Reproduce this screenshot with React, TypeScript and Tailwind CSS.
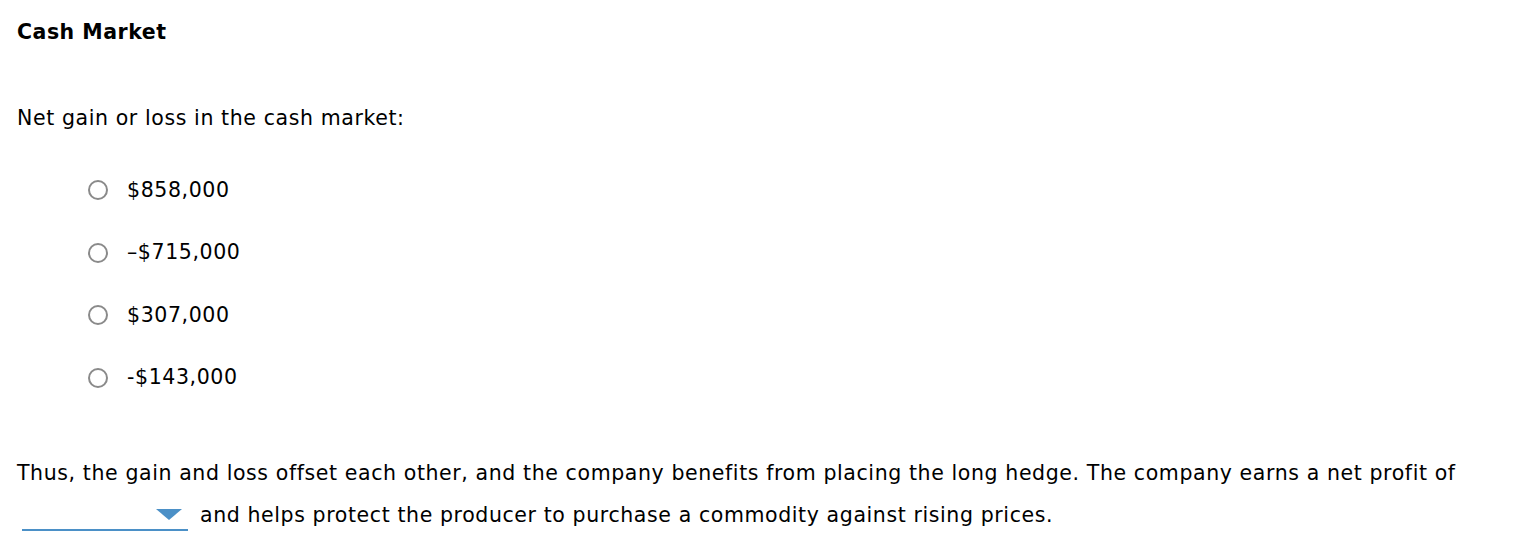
const options = ["$858,000", "\u2013$715,000", "$307,000", "-$143,000"];

export default function App() {
  return (
    <div className="h-[560px] w-[1532px] bg-white px-[17px] text-black" style={{ fontFamily: "Verdana, 'DejaVu Sans', sans-serif" }}>
      <div className="pt-[19px] text-[20.5px] leading-[26px] font-bold tracking-[0.5px]">Cash Market</div>
      <div className="mt-[60px] text-[20.5px] leading-[26px] tracking-[0.6px]">Net gain or loss in the cash market:</div>
      <div className="mt-[46px] flex flex-col gap-[36.5px] pl-[71px]">
        {options.map((o) => (
          <label key={o} className="flex h-[26px] items-center gap-[19px] text-[20.5px] tracking-[0.6px]">
            <span className="h-[20px] w-[20px] rounded-full border-2 border-[#8a8a8a] bg-white" />
            <span>{o}</span>
          </label>
        ))}
      </div>
      <div className="mt-[61px] text-[20.5px] leading-[42px] tracking-[0.6px]">
        Thus, the gain and loss offset each other, and the company benefits from placing the long hedge. The company earns a net profit of{" "}
        <br />
        <span className="relative mr-[12px] ml-[5px] inline-block h-[30px] w-[166px] border-b-2 border-[#4b90c7] align-[-9px]">
          <svg className="absolute top-[8px] right-[6px]" width="26" height="11" viewBox="0 0 26 11">
            <path d="M0 0 H26 L13 11 Z" fill="#4b90c7" />
          </svg>
        </span>
        and helps protect the producer to purchase a commodity against rising prices.
      </div>
    </div>
  );
}
